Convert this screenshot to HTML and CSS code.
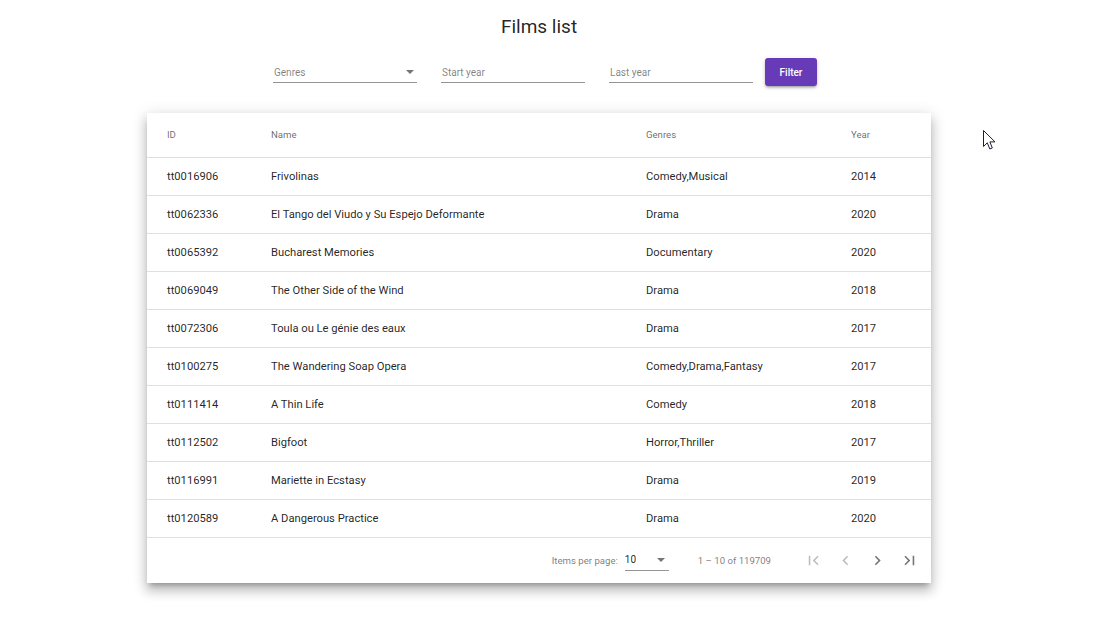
FILE: index.html
```html
<!DOCTYPE html>
<html lang="en">
<head>
<meta charset="utf-8">
<title>Films list</title>
<link rel="stylesheet" href="styles.css">
</head>
<body>
<div class="page">
  <h1 class="title">Films list</h1>
  <form class="filters">
    <div class="field field-select">
      <span class="placeholder">Genres</span>
      <span class="arrow"></span>
    </div>
    <div class="field">
      <span class="placeholder">Start year</span>
    </div>
    <div class="field">
      <span class="placeholder">Last year</span>
    </div>
    <button type="button" class="btn">Filter</button>
  </form>

  <div class="card">
    <table class="films">
      <colgroup>
        <col class="c-id"><col class="c-name"><col class="c-genres"><col class="c-year">
      </colgroup>
      <thead>
        <tr><th>ID</th><th>Name</th><th>Genres</th><th>Year</th></tr>
      </thead>
      <tbody>
        <tr><td>tt0016906</td><td>Frivolinas</td><td>Comedy,Musical</td><td>2014</td></tr>
        <tr><td>tt0062336</td><td>El Tango del Viudo y Su Espejo Deformante</td><td>Drama</td><td>2020</td></tr>
        <tr><td>tt0065392</td><td>Bucharest Memories</td><td>Documentary</td><td>2020</td></tr>
        <tr><td>tt0069049</td><td>The Other Side of the Wind</td><td>Drama</td><td>2018</td></tr>
        <tr><td>tt0072306</td><td>Toula ou Le génie des eaux</td><td>Drama</td><td>2017</td></tr>
        <tr><td>tt0100275</td><td>The Wandering Soap Opera</td><td>Comedy,Drama,Fantasy</td><td>2017</td></tr>
        <tr><td>tt0111414</td><td>A Thin Life</td><td>Comedy</td><td>2018</td></tr>
        <tr><td>tt0112502</td><td>Bigfoot</td><td>Horror,Thriller</td><td>2017</td></tr>
        <tr><td>tt0116991</td><td>Mariette in Ecstasy</td><td>Drama</td><td>2019</td></tr>
        <tr><td>tt0120589</td><td>A Dangerous Practice</td><td>Drama</td><td>2020</td></tr>
      </tbody>
    </table>
    <div class="paginator">
      <span class="pg-label">Items per page:</span>
      <div class="pg-select"><span>10</span><span class="arrow"></span></div>
      <span class="pg-range">1 – 10 of 119709</span>
      <button type="button" class="icon-btn disabled" aria-label="First page">
        <svg viewBox="0 0 24 24"><path d="M18.41 16.59L13.82 12l4.59-4.59L17 6l-6 6 6 6zM6 6h2v12H6z"/></svg>
      </button>
      <button type="button" class="icon-btn disabled" aria-label="Previous page">
        <svg viewBox="0 0 24 24"><path d="M15.41 7.41L14 6l-6 6 6 6 1.41-1.41L10.83 12z"/></svg>
      </button>
      <button type="button" class="icon-btn" aria-label="Next page">
        <svg viewBox="0 0 24 24"><path d="M10 6L8.59 7.41 13.17 12l-4.58 4.59L10 18l6-6z"/></svg>
      </button>
      <button type="button" class="icon-btn" aria-label="Last page">
        <svg viewBox="0 0 24 24"><path d="M5.59 7.41L10.18 12l-4.59 4.59L7 18l6-6-6-6zM16 6h2v12h-2z"/></svg>
      </button>
    </div>
  </div>
</div>
<svg class="cursor" viewBox="0 0 13 21" width="13" height="21">
  <path d="M0.5 0.5 L0.5 16.5 L4.3 12.8 L6.8 19 L9.3 18 L6.9 11.9 L12 11.9 Z" fill="#fff" stroke="#1b1f3a" stroke-width="1" stroke-linejoin="round"/>
</svg>
</body>
</html>
```

FILE: styles.css
```css
* { box-sizing: border-box; }
html, body {
  margin: 0;
  padding: 0;
  background: #fff;
  font-family: Roboto, "Noto Sans", "Liberation Sans", sans-serif;
  color: rgba(0,0,0,.87);
}
.page {
  width: 1078px;
  padding-bottom: 30px;
  display: flex;
  flex-direction: column;
  align-items: center;
}
.title {
  margin: 0;
  padding-top: 15px;
  font-size: 19px;
  font-weight: 400;
  line-height: 24px;
  color: rgba(0,0,0,.87);
}
.filters {
  margin-top: 19px;
  padding-left: 12px;
  display: flex;
  align-items: flex-start;
  height: 28px;
}
.field {
  position: relative;
  width: 144px;
  margin-right: 24px;
  padding-top: 9px;
  padding-bottom: 3px;
  border-bottom: 1px solid rgba(0,0,0,.42);
  height: 25px;
}
.field:nth-child(3) { margin-right: 12px; }
.placeholder {
  display: block;
  padding-left: 1px;
  font-size: 10px;
  line-height: 12px;
  color: rgba(0,0,0,.5);
}
.arrow {
  position: absolute;
  right: 3px;
  top: 12px;
  width: 0;
  height: 0;
  border-left: 4.5px solid transparent;
  border-right: 4.5px solid transparent;
  border-top: 4.5px solid rgba(0,0,0,.54);
}
.btn {
  width: 52px;
  height: 28px;
  border: none;
  border-radius: 3px;
  background: #673ab7;
  color: #fff;
  font-family: inherit;
  font-size: 10px;
  font-weight: 500;
  padding: 0;
  box-shadow: 0 2px 2px -1px rgba(0,0,0,.2), 0 2px 3px 0 rgba(0,0,0,.14), 0 1px 5px 0 rgba(0,0,0,.12);
}
.card {
  margin-top: 27px;
  width: 784px;
  background: #fff;
  box-shadow: 0 5px 5px -3px rgba(0,0,0,.25), 0 8px 10px 1px rgba(0,0,0,.16), 0 3px 14px 2px rgba(0,0,0,.12);
}
.films {
  width: 100%;
  border-collapse: collapse;
  table-layout: fixed;
}
.c-id { width: 124px; }
.c-name { width: 375px; }
.c-genres { width: 205px; }
.films th, .films td {
  text-align: left;
  padding: 0;
  border-bottom: 1px solid #e0e0e0;
}
.films th:first-child, .films td:first-child { padding-left: 20px; }
.films th {
  height: 44px;
  font-size: 9.6px;
  font-weight: 400;
  color: rgba(0,0,0,.6);
}
.films td {
  height: 38px;
  font-size: 11.2px;
  color: rgba(0,0,0,.87);
}
.paginator {
  height: 45px;
  display: flex;
  align-items: center;
  justify-content: flex-end;
  padding-right: 6px;
  font-size: 9.6px;
  color: rgba(0,0,0,.54);
}
.pg-label { margin-right: 7px; }
.pg-select {
  position: relative;
  width: 44px;
  height: 17px;
  border-bottom: 1px solid rgba(0,0,0,.42);
  margin-top: 4px;
  font-size: 10px;
  color: rgba(0,0,0,.87);
  line-height: 11px;
  margin-right: 29px;
}
.pg-select .arrow { top: 4px; right: 4px; border-left-width: 4px; border-right-width: 4px; border-top-width: 4px; }
.pg-range { margin-right: 26px; }
.icon-btn {
  width: 32px;
  height: 32px;
  padding: 0;
  border: none;
  background: none;
  display: flex;
  align-items: center;
  justify-content: center;
}
.icon-btn svg { width: 19px; height: 19px; fill: rgba(0,0,0,.54); }
.icon-btn.disabled svg { fill: rgba(0,0,0,.26); }
.cursor {
  position: absolute;
  left: 983px;
  top: 130px;
}
```
